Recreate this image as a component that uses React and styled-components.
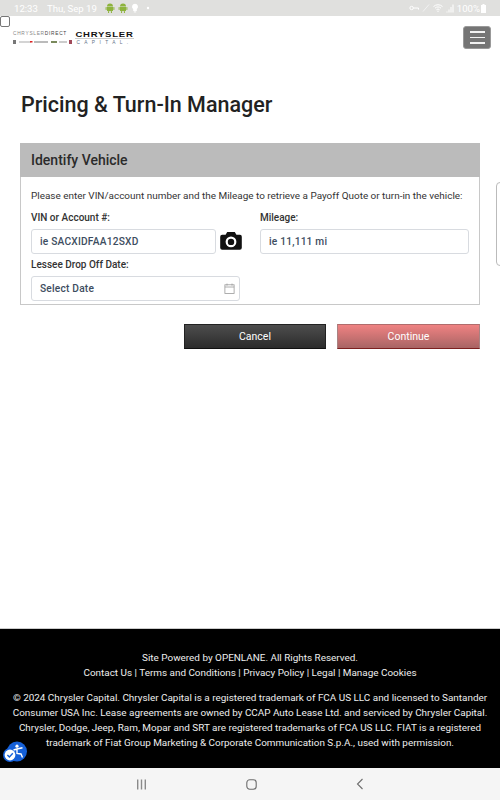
import React from "react";
import styled, { createGlobalStyle } from "styled-components";

const Global = createGlobalStyle`
  html, body { margin: 0; padding: 0; background: #fff; }
  * { box-sizing: border-box; }
  body { font-family: Roboto, "Liberation Sans", sans-serif; }
`;
const Page = styled.div`
  position: relative; width: 500px; height: 800px; display: flex; flex-direction: column; overflow: hidden;
`;
const StatusBar = styled.div`
  height: 16px; flex: none; background: #e0e0de; color: #fff; font-size: 9.6px; display: flex; align-items: center;
  justify-content: space-between; padding: 0 14px 0 14px;
`;
const StatusGroup = styled.div`display: flex; align-items: center; gap: ${p => p.$gap || 4}px;`;
const StatusText = styled.span`margin-right: ${p => p.$mr || 0}px;`;
const Header = styled.header`
  height: 40px; flex: none; position: relative; display: flex; align-items: flex-start; justify-content: space-between;
  padding: 10px 9px 0 13px;
`;
const SkipBox = styled.input`
  position: absolute; left: 0; top: 0; width: 10px; height: 11px; margin: 0; appearance: none;
  border: 1px solid #777; border-radius: 2px; background: #fff;
`;
const Logos = styled.div`display: flex; gap: 3px; padding-top: 5px;`;
const LogoLeft = styled.div`width: 59px; display: flex; flex-direction: column; gap: 3px;`;
const DirectMark = styled.div`
  font-family: "Liberation Sans", sans-serif; font-size: 4.8px; line-height: 6px; letter-spacing: .72px; color: #888; white-space: nowrap;
  & b { color: #444; font-weight: 400; }
`;
const BrandStrip = styled.svg`display: block;`;
const LogoRight = styled.div`width: 59px; display: flex; flex-direction: column; align-items: center;`;
const ChryslerMark = styled.div`
  font-family: "Liberation Sans", sans-serif; font-weight: 700; font-size: 6.6px; line-height: 7px; letter-spacing: .55px; color: #111;
  transform: scaleX(1.44); white-space: nowrap; width: 100%; text-align: center;
`;
const LogoRule = styled.div`width: 100%; height: 1px; background: #ccc; margin: 0 0 1px;`;
const CapitalMark = styled.div`
  font-family: "Liberation Sans", sans-serif; font-size: 4.8px; line-height: 6px; letter-spacing: 4.4px; color: #5f7388; white-space: nowrap;
`;
const MenuButton = styled.button`
  width: 28px; height: 23px; background: #757575; border: 1px solid #999; border-radius: 3px; padding: 0;
  display: flex; flex-direction: column; align-items: center; justify-content: center; gap: 4px;
`;
const MenuBar = styled.span`display: block; width: 15px; height: 1.5px; background: #f2f2f2;`;
const Main = styled.main`flex: 1; padding: 36px 20px 0;`;
const Title = styled.h1`
  margin: 0 0 26px 1px; font-size: 21.5px; line-height: 25px; font-weight: 500; color: #222;
`;
const Card = styled.section`border: 1px solid #c8c8c8; border-top: 0; height: 162px;`;
const CardHead = styled.div`
  height: 34px; margin: 0 -1px; background: #bbb; display: flex; align-items: center; padding-left: 11px;
  font-size: 14px; font-weight: 500; color: #2b2b2b;
`;
const CardBody = styled.div`padding: 13px 10px 0;`;
const Intro = styled.p`margin: 0 0 10px; font-size: 9.95px; line-height: 12px; color: #333; white-space: nowrap;`;
const FieldRow = styled.div`display: flex;`;
const VinColumn = styled.div`width: 229px;`;
const MileColumn = styled.div`width: 209px;`;
const Label = styled.label`display: block; font-size: 10px; line-height: 12px; font-weight: 500; color: #333; margin-bottom: 5px;`;
const InputLine = styled.div`display: flex; align-items: center; gap: 3px;`;
const FieldBox = styled.div`
  width: ${p => p.$w}px; height: 25px; border: 1px solid #d8dbe0; border-radius: 3px; background: #fff;
  display: flex; align-items: center; justify-content: space-between; padding: 0 4px 0 8px;
  font-size: 10.2px; font-weight: 500; color: #3d4d60; letter-spacing: .2px;
`;
const DateLabel = styled(Label)`margin-top: 5px;`;
const Actions = styled.div`display: flex; justify-content: flex-end; gap: 11px; margin-top: 19px;`;
const ActionButton = styled.button`
  width: ${p => p.$w}px; height: 25px; font-family: Roboto, sans-serif; font-size: 10.5px; color: #fff; padding: 0;
  border: 1px solid ${p => p.$primary ? "#a98282" : "#222"}; border-bottom: 1px solid ${p => p.$primary ? "#7d1f1f" : "#111"};
  background: ${p => p.$primary ? "linear-gradient(#ef8282, #a86464)" : "linear-gradient(#4d4d4d, #2c2c2c)"};
  ${p => p.$primary && "border-top-color: #b06c6c;"}
`;
const Footer = styled.footer`
  height: 140px; flex: none; background: #000; border-top: 1px solid #ccc; color: #eee; text-align: center;
  font-size: 9.92px; line-height: 15px; padding: 21px 8px 0;
`;
const FooterLine = styled.div``;
const Legal = styled.p`margin: 10px 0 0;`;
const A11y = styled.svg`position: absolute; left: 3px; top: 741px; display: block;`;
const NavBar = styled.div`
  height: 32px; flex: none; background: #f5f5f5; display: flex; align-items: center; justify-content: space-between;
  padding: 0 136px;
`;
const SideHandle = styled.div`
  position: absolute; right: -6px; top: 182px; width: 10px; height: 84px; border: 1px solid #bbb; border-radius: 4px; background: #fff;
`;

const Android = () => (
  <svg width="10" height="10" viewBox="0 0 10 10">
    <path d="M2 3.6a3 3 0 0 1 6 0z M2 4h6v3.4a.7.7 0 0 1-.7.7H2.7a.7.7 0 0 1-.7-.7z" fill="#8db33c" />
    <rect x=".6" y="4" width="1" height="3" rx=".5" fill="#8db33c" />
    <rect x="8.4" y="4" width="1" height="3" rx=".5" fill="#8db33c" />
    <rect x="3" y="8" width="1.1" height="2" rx=".5" fill="#8db33c" />
    <rect x="5.9" y="8" width="1.1" height="2" rx=".5" fill="#8db33c" />
  </svg>
);

export default function App() {
  return (
    <Page>
      <Global />
      <StatusBar>
        <StatusGroup $gap={3}>
          <StatusText $mr={6}>12:33</StatusText>
          <StatusText $mr={5}>Thu, Sep 19</StatusText>
          <Android />
          <Android />
          <svg width="8" height="10" viewBox="0 0 8 10"><path d="M4 .8a3 3 0 0 1 1.8 5.4V8H2.2V6.2A3 3 0 0 1 4 .8z" fill="#fff" /><rect x="2.8" y="8.4" width="2.4" height="1" fill="#fff" /></svg>
          <svg width="8" height="8" viewBox="0 0 8 8" style={{ marginLeft: 2 }}><circle cx="4" cy="4" r="1.2" fill="#fff" /></svg>
        </StatusGroup>
        <StatusGroup $gap={3}>
          <svg width="10" height="8" viewBox="0 0 10 8"><circle cx="2.6" cy="4" r="1.7" fill="none" stroke="#fff" /><path d="M4.3 4H9.5V5.6" fill="none" stroke="#fff" /></svg>
          <svg width="8" height="8" viewBox="0 0 8 8"><path d="M1 7.5 7 .5" stroke="#f2f2f2" fill="none" /></svg>
          <svg width="10" height="8" viewBox="0 0 10 8"><path d="M.5 2.6a6.4 6.4 0 0 1 9 0M2 4.2a4.2 4.2 0 0 1 6 0M3.4 5.8a2.2 2.2 0 0 1 3.2 0" stroke="#fff" fill="none" /><circle cx="5" cy="7.2" r=".7" fill="#fff" /></svg>
          <svg width="8" height="9" viewBox="0 0 8 9"><path d="M.5 7.5h1v1h-1zM2.5 5.5h1v3h-1zM4.5 3h1v5.5h-1zM6.5.5h1v8h-1z" fill="#fff" /></svg>
          <StatusText>100%</StatusText>
          <svg width="5" height="9" viewBox="0 0 5 9" style={{ marginLeft: -2 }}><path d="M1.5 0h2v1H5v8H0V1h1.5z" fill="#fff" /></svg>
        </StatusGroup>
      </StatusBar>
      <Header>
        <SkipBox type="checkbox" aria-label="Skip" />
        <Logos>
          <LogoLeft>
            <DirectMark>CHRYSLER<b>DIRECT</b></DirectMark>
            <BrandStrip width="60" height="4" viewBox="0 0 60 4">
              <rect x="0" y="0" width="3" height="4" fill="#777" />
              <rect x="6" y="1.5" width="12" height="1" fill="#aaa" />
              <rect x="17" y="1" width="2.5" height="1.5" fill="#d22" />
              <rect x="21" y="1" width="14" height="2" fill="#bbb" />
              <rect x="38" y="1" width="6" height="2" fill="#7a8a5c" />
              <rect x="46" y="1.5" width="8" height="1" fill="#999" />
              <rect x="56" y="0" width="3" height="4" fill="#a14a5a" />
            </BrandStrip>
          </LogoLeft>
          <LogoRight>
            <ChryslerMark>CHRYSLER</ChryslerMark>
            <LogoRule />
            <CapitalMark>CAPITAL.</CapitalMark>
          </LogoRight>
        </Logos>
        <MenuButton aria-label="Menu"><MenuBar /><MenuBar /><MenuBar /></MenuButton>
      </Header>
      <Main>
        <Title>Pricing &amp; Turn-In Manager</Title>
        <Card>
          <CardHead>Identify Vehicle</CardHead>
          <CardBody>
            <Intro>Please enter VIN/account number and the Mileage to retrieve a Payoff Quote or turn-in the vehicle:</Intro>
            <FieldRow>
              <VinColumn>
                <Label>VIN or Account #:</Label>
                <InputLine>
                  <FieldBox $w={185}>ie SACXIDFAA12SXD</FieldBox>
                  <svg width="24" height="24" viewBox="0 1.5 24 24">
                    <path d="M8.2 3.5h7.6l1.6 2.7h3.6A2 2 0 0 1 22.8 8.2v11a2 2 0 0 1-2 2H3.2a2 2 0 0 1-2-2v-11a2 2 0 0 1 2-2h3.4z" fill="#111" />
                    <circle cx="12" cy="13.4" r="5.4" fill="#fff" />
                    <circle cx="12" cy="13.4" r="3.2" fill="#111" />
                  </svg>
                </InputLine>
              </VinColumn>
              <MileColumn>
                <Label>Mileage:</Label>
                <FieldBox $w={209}>ie 11,111 mi</FieldBox>
              </MileColumn>
            </FieldRow>
            <DateLabel>Lessee Drop Off Date:</DateLabel>
            <FieldBox $w={209}>
              Select Date
              <svg width="11" height="11" viewBox="0 0 11 11" fill="none" stroke="#9a9a9a" strokeWidth=".8"><rect x=".9" y="1.8" width="9.2" height="8.6" /><path d="M.9 4h9.2M3 .6v2M8 .6v2" /></svg>
            </FieldBox>
          </CardBody>
        </Card>
        <Actions>
          <ActionButton $w={142}>Cancel</ActionButton>
          <ActionButton $w={143} $primary>Continue</ActionButton>
        </Actions>
      </Main>
      <Footer>
        <FooterLine>Site Powered by OPENLANE. All Rights Reserved.</FooterLine>
        <FooterLine>Contact Us | Terms and Conditions | Privacy Policy | Legal | Manage Cookies</FooterLine>
        <Legal>© 2024 Chrysler Capital. Chrysler Capital is a registered trademark of FCA US LLC and licensed to Santander Consumer USA Inc. Lease agreements are owned by CCAP Auto Lease Ltd. and serviced by Chrysler Capital. Chrysler, Dodge, Jeep, Ram, Mopar and SRT are registered trademarks of FCA US LLC. FIAT is a registered trademark of Fiat Group Marketing &amp; Corporate Communication S.p.A., used with permission.</Legal>
      </Footer>
      <NavBar>
        <svg width="11" height="11" viewBox="0 0 11 11" fill="#8a8a8a"><rect x="1" y="0.5" width="1.4" height="10" /><rect x="4.8" y="0.5" width="1.4" height="10" /><rect x="8.6" y="0.5" width="1.4" height="10" /></svg>
        <svg width="11" height="11" viewBox="0 0 11 11" fill="none" stroke="#6e6e6e" strokeWidth="1.1"><rect x=".8" y=".8" width="9.4" height="9.4" rx="3" /></svg>
        <svg width="8" height="12" viewBox="0 0 8 12" fill="none" stroke="#6e6e6e" strokeWidth="1.1"><path d="M6.5 1 1.5 6l5 5" /></svg>
      </NavBar>
      <A11y width="24" height="22" viewBox="0 0 24 22">
        <circle cx="14" cy="10.5" r="10" fill="#1560d8" />
        <circle cx="7" cy="14" r="7" fill="#1560d8" />
        <circle cx="14" cy="5.2" r="1.6" fill="#fff" />
        <path d="M14 7.5v5l4 .5 1.5 3.5M10.5 9l3.5-1 5.5-1.2" stroke="#fff" strokeWidth="1.4" fill="none" />
        <circle cx="7" cy="14" r="5.4" fill="#fff" />
        <path d="M4.4 14l2 2 3.4-3.8" stroke="#1560d8" strokeWidth="1.4" fill="none" />
      </A11y>
      <SideHandle />
    </Page>
  );
}
